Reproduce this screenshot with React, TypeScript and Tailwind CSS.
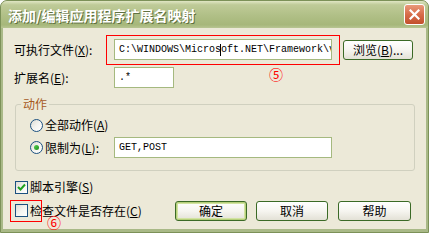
import React from "react";

const cjk = { fontFamily: '"Noto Sans CJK SC", "Liberation Sans", sans-serif' };
const mono = { fontFamily: '"Liberation Mono", "DejaVu Sans Mono", monospace' };

function TextBox({ w, children }: { w: string; children?: React.ReactNode }) {
  return (
    <div
      className={`${w} h-[21px] shrink-0 bg-white border border-[#A5B97F] flex items-center pl-[4px] overflow-hidden whitespace-nowrap text-[10px] text-black`}
      style={mono}
    >
      {children}
    </div>
  );
}

function XPButton({ label, def, w = "w-[72px]" }: { label: React.ReactNode; def?: boolean; w?: string }) {
  return (
    <div
      className={`${w} h-[20px] shrink-0 rounded-[3px] border border-[#3B6A26] bg-gradient-to-b from-white via-[#F6F5F0] to-[#E3E1D6] flex items-center justify-center text-[12px] text-black ${
        def ? "shadow-[inset_0_0_0_1px_#B5CF7A,inset_0_0_0_2px_#D2E3A2]" : ""
      }`}
      style={cjk}
    >
      {label}
    </div>
  );
}

function Radio({ checked }: { checked?: boolean }) {
  return (
    <div className="w-[13px] h-[13px] shrink-0 rounded-full border border-[#1C5180] bg-gradient-to-br from-[#DCDBD3] via-[#F4F4F0] to-white flex items-center justify-center">
      {checked && <div className="w-[5px] h-[5px] rounded-full bg-gradient-to-br from-[#55D051] to-[#1E8F1B]" />}
    </div>
  );
}

function Check({ checked }: { checked?: boolean }) {
  return (
    <div className="w-[13px] h-[13px] shrink-0 border border-[#1C5180] bg-gradient-to-br from-[#DCDBD3] via-[#F4F4F0] to-white flex items-center justify-center">
      {checked && (
        <svg width="9" height="9" viewBox="0 0 9 9">
          <path d="M1 4 L3.5 6.5 L8 1.5" stroke="#21A121" strokeWidth="2" fill="none" />
        </svg>
      )}
    </div>
  );
}

export default function App() {
  return (
    <div className="w-[429px] h-[233px] bg-[#A9B987] rounded-t-[7px] border border-[#7C9158] flex flex-col overflow-hidden">
      {/* Title bar */}
      <div className="h-[27px] shrink-0 bg-[linear-gradient(to_bottom,#E0E6C4_0%,#BFCB98_14%,#B0BF86_55%,#A6B77A_88%,#B8C592_100%)] flex items-center justify-between pl-[7px] pr-[3px]">
        <span
          className="text-white font-bold text-[14px] leading-none tracking-[0px] [text-shadow:1px_1px_0_#5F7040]"
          style={cjk}
        >
          添加/编辑应用程序扩展名映射
        </span>
        <div className="w-[21px] h-[21px] rounded-[3px] border border-white bg-gradient-to-b from-[#E9997A] via-[#D76C49] to-[#C24F2C] flex items-center justify-center">
          <svg width="11" height="11" viewBox="0 0 11 11">
            <path d="M1.5 1.5 L9.5 9.5 M9.5 1.5 L1.5 9.5" stroke="white" strokeWidth="2.2" strokeLinecap="square" />
          </svg>
        </div>
      </div>

      {/* Body */}
      <div className="flex-1 mx-[2px] mb-[3px] bg-[#ECE9D8] relative pl-[11px] pt-[11px] text-[12px] text-black" style={cjk}>
        {/* Row 1 */}
        <div className="flex items-center h-[21px]">
          <div className="w-[100px] shrink-0 leading-none">
            可执行文件(<span className="underline">X</span>):
          </div>
          <TextBox w="w-[218px]">
            C:\WINDOWS\Micros
            <span className="inline-block h-[12px] border-l border-black ml-[-1px]" />
            oft.NET\Framework\v
          </TextBox>
          <div className="ml-[11px]">
            <XPButton w="w-[70px]" label={<span>浏览(<span className="underline">B</span>)...</span>} />
          </div>
        </div>

        {/* Row 2 */}
        <div className="flex items-center h-[21px] mt-[7px]">
          <div className="w-[100px] shrink-0 leading-none">
            扩展名(<span className="underline">E</span>):
          </div>
          <TextBox w="w-[60px]">.*</TextBox>
        </div>

        {/* Group */}
        <div className="ml-[1px] mt-[16px] w-[400px] h-[67px] border border-[#D0D0BF] rounded-[3px] relative pl-[14px] pt-[12px]">
          <div className="absolute left-[5px] top-[-9px] px-[2px] bg-[#ECE9D8] text-[#A65A1E] leading-[16px]">动作</div>
          <div className="flex items-center h-[16px] gap-[2px]">
            <Radio />
            <span className="leading-none">
              全部动作(<span className="underline">A</span>)
            </span>
          </div>
          <div className="flex items-center h-[21px] mt-[4px]">
            <div className="w-[84px] flex items-center gap-[2px] shrink-0">
              <Radio checked />
              <span className="leading-none">
                限制为(<span className="underline">L</span>):
              </span>
            </div>
            <TextBox w="w-[218px]">GET,POST</TextBox>
          </div>
        </div>

        {/* Checkbox 1 */}
        <div className="flex items-center h-[16px] mt-[8px] ml-[1px] gap-[2px]">
          <Check checked />
          <span className="leading-none">
            脚本引擎(<span className="underline">S</span>)
          </span>
        </div>

        {/* Checkbox 2 + buttons */}
        <div className="flex items-center h-[21px] mt-[5px] ml-[1px]">
          <div className="flex items-center gap-[2px] w-[160px]">
            <Check />
            <span className="leading-none">
              检查文件是否存在(<span className="underline">C</span>)
            </span>
          </div>
          <XPButton label="确定" def />
          <div className="ml-[9px]">
            <XPButton label="取消" />
          </div>
          <div className="ml-[10px]">
            <XPButton label="帮助" w="w-[73px]" />
          </div>
        </div>

        {/* Annotations */}
        <div className="absolute left-[103px] top-[7px] w-[234px] h-[30px] border border-[#FF0000]" />
        <div className="absolute left-[266px] top-[39px] text-[14px] leading-none text-[#FF0000]">⑤</div>
        <div className="absolute left-[7px] top-[172px] w-[32px] h-[22px] border border-[#FF0000]" />
        <div className="absolute left-[44px] top-[187px] text-[14px] leading-none text-[#FF0000]">⑥</div>
      </div>
    </div>
  );
}
